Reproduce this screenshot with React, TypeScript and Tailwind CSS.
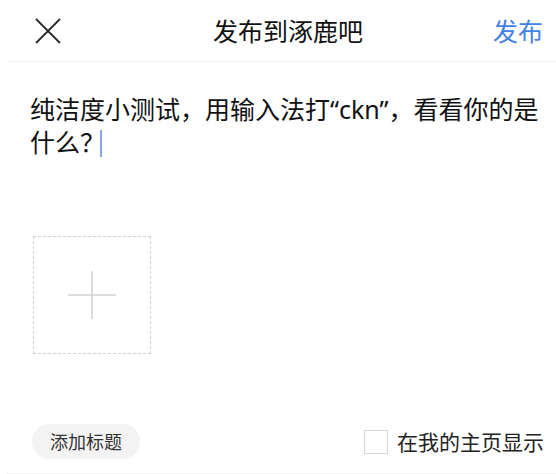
export default function App() {
  return (
    <div
      className="flex h-[474px] w-[556px] flex-col bg-white text-[#222]"
      style={{ fontFamily: '"Noto Sans CJK SC", "Noto Sans", sans-serif' }}
    >
      {/* 顶部栏 */}
      <div className="ml-[7px] flex h-[62px] shrink-0 items-center border-b border-[#f2f2f2] pl-[28px] pr-[13px]">
        <svg width="26" height="26" viewBox="0 0 26 26" className="shrink-0">
          <path d="M1 1 L25 25 M25 1 L1 25" stroke="#2a2a2a" strokeWidth="1.8" fill="none" />
        </svg>
        <div className="flex-1 pl-[22px] text-center text-[25px] leading-none text-[#111]">发布到涿鹿吧</div>
        <div className="text-[25px] leading-none text-[#3f82e4]">发布</div>
      </div>

      {/* 正文 */}
      <div className="pl-[30px] pr-[10px] pt-[31px]">
        <p className="text-[25px] leading-[31px] text-[#111]">
          纯洁度小测试，用输入法打<span className="font-['Noto_Sans']">“ckn”</span>，看看你的是什么？
          <span className="ml-[-5px] inline-block h-[27px] w-[2px] translate-y-[5px] bg-[#86a6e6] align-baseline" />
        </p>

        <div className="ml-[3px] mt-[79px] flex h-[118px] w-[118px] items-center justify-center border border-dashed border-[#cfcfcf]">
          <svg width="48" height="48" viewBox="0 0 48 48">
            <path d="M24 0 V48 M0 24 H48" stroke="#d2d2d2" strokeWidth="1.6" />
          </svg>
        </div>
      </div>

      {/* 底部栏 */}
      <div className="ml-[7px] mt-auto flex items-center justify-between border-b border-[#f2f2f2] pb-[14px] pl-[25px] pr-[12px]">
        <div className="flex h-[35px] w-[108px] items-center justify-center rounded-full bg-[#f3f3f3] text-[18px] text-[#333]">
          添加标题
        </div>
        <div className="flex items-center gap-[9px]">
          <div className="h-[24px] w-[24px] border-[1.5px] border-[#d6d6d6] bg-white" />
          <span className="text-[21px] leading-none text-[#222]">在我的主页显示</span>
        </div>
      </div>
    </div>
  );
}
